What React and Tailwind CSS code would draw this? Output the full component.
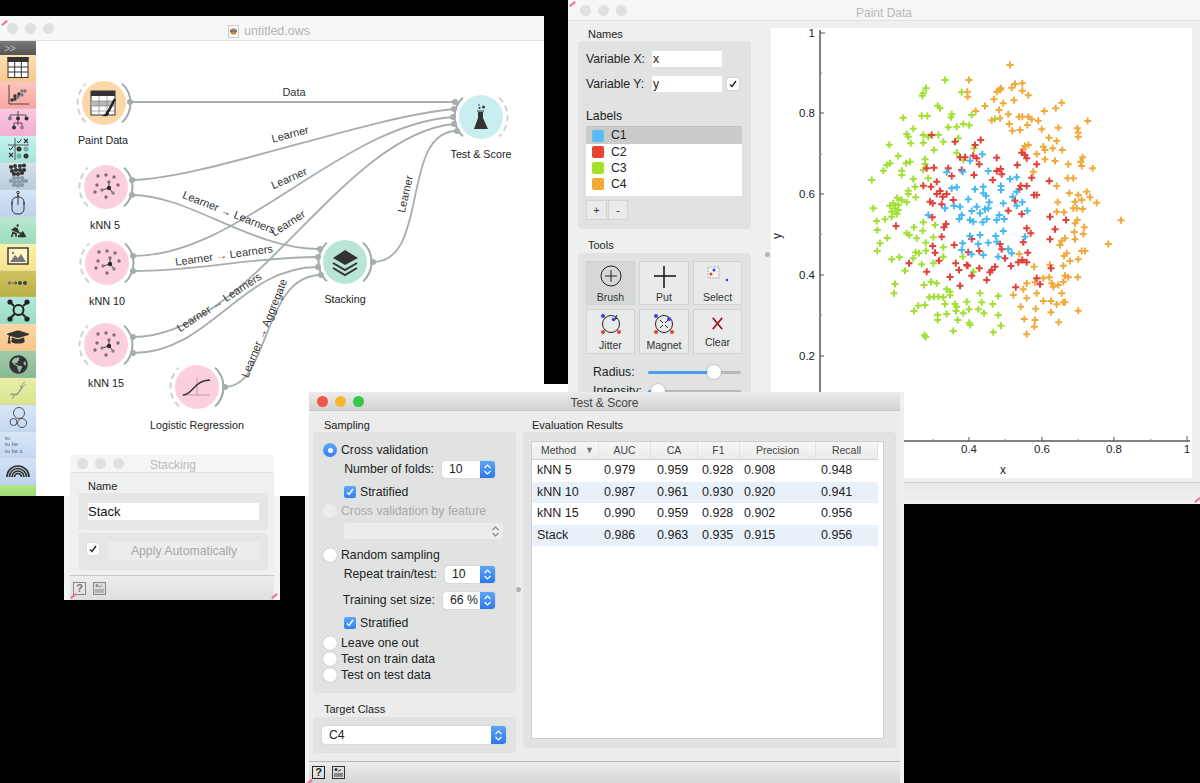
import React from "react";
import { FaGlobeAmericas, FaGraduationCap } from "react-icons/fa";
import { FaPersonDigging } from "react-icons/fa6";

const SANS = "font-['Liberation_Sans',Arial,sans-serif]";

const ORANGE = [720,135,597,180,592,215,593,230,735,192,757,190,725,203,693,205,680,215,690,210,757,212,775,226,672,238,700,250,732,241,645,258,617,273,687,270,715,283,747,290,757,290,775,290,785,298,805,302,823,273,857,265,875,248,953,303,922,325,925,338,925,350,865,323,815,328,837,353,860,363,820,380,825,390,848,385,877,390,665,301,690,295,718,312,727,332,750,330,772,315,775,375,765,378,760,388,800,402,825,418,855,423,895,433,938,412,932,425,935,438,968,445,893,475,910,475,790,455,860,498,898,520,925,525,950,515,935,540,960,532,980,548,915,545,910,565,920,565,938,567,863,547,860,575,882,577,922,600,915,610,1053,601,943,622,913,636,940,642,915,658,885,655,875,662,870,675,1015,672,935,693,945,693,890,700,882,708,925,718,900,723,748,702,880,737,840,735,792,740,885,767,895,772,923,772,838,772,820,775,795,787,770,790,760,808,730,825,770,835,800,820,820,843,843,843,860,853,880,847,885,847,845,790,850,800,865,795,880,785,875,820,752,860,797,866,843,877,925,872,763,897,795,900,793,920,866,907,770,943];
const GREEN = [525,180,468,205,460,220,457,227,575,217,503,257,510,265,545,283,543,292,400,293,455,287,472,288,605,285,675,297,430,326,535,322,560,320,580,312,598,316,410,342,415,350,422,370,460,345,475,350,505,345,520,365,565,355,460,368,358,374,492,390,385,408,560,398,465,418,612,385,580,420,360,430,350,435,408,430,420,425,340,452,395,452,395,465,465,432,460,450,430,477,305,480,475,475,435,500,415,512,415,522,437,532,382,533,395,540,410,547,360,557,370,550,385,555,375,565,385,570,365,575,380,582,310,565,365,590,345,598,320,603,322,630,432,622,460,607,458,632,495,615,410,640,418,645,352,654,440,655,490,652,330,670,467,668,322,693,520,682,437,697,447,700,468,692,365,718,388,712,430,715,520,710,490,730,455,733,405,752,578,710,610,755,375,792,372,820,462,795,483,785,500,790,530,808,540,815,630,820,540,826,478,832,492,830,505,830,520,832,525,852,590,845,635,847,685,828,668,852,465,855,445,857,432,873,555,852,560,860,558,873,530,882,503,885,580,880,597,868,625,868,642,880,685,885,503,900,563,900,598,908,600,915,693,917,550,933,670,937,463,946,467,950];
const RED = [485,345,555,365,632,360,615,375,570,412,585,412,610,407,620,415,628,433,680,413,755,398,765,405,770,415,800,433,742,435,470,445,492,443,535,445,575,450,545,468,612,465,680,453,692,447,695,463,668,480,785,473,838,483,460,497,483,500,500,485,752,497,770,498,748,508,792,525,800,525,500,522,510,513,530,522,480,545,488,550,518,530,515,553,550,540,735,542,715,572,755,582,840,590,888,600,487,592,528,612,522,622,378,618,515,650,770,625,782,640,855,628,840,658,605,657,760,667,488,678,553,675,690,672,695,688,495,698,595,697,628,693,705,715,773,698,507,722,417,730,557,730,590,735,593,737,567,750,628,745,665,750,675,740,723,738,745,727,757,720,770,727,843,745,470,755,660,757,605,767,540,771,650,780,570,797,800,775,810,793,737,802];
const BLUE = [637,403,600,422,530,457,578,455,655,453,720,477,740,472,545,505,560,502,615,508,640,500,693,498,693,510,640,520,648,527,740,515,595,538,728,530,525,565,552,557,570,560,620,560,645,568,655,565,658,547,700,550,757,547,740,557,605,573,575,585,630,580,475,585,568,597,600,600,610,605,650,597,638,607,680,600,703,597,688,585,772,572,700,633,600,648,630,645,677,648,765,650,578,670,625,672,655,668,680,665,575,690,605,703,685,710,715,687,725,700,640,705];

function plusPath(arr) {
  let d = "";
  for (let i = 0; i < arr.length; i += 2) {
    const x = 770 + arr[i] / 3;
    const y = 20 + arr[i + 1] / 3;
    d += `M${(x - 3.5).toFixed(1)} ${y.toFixed(1)}h7M${x.toFixed(1)} ${(y - 3.5).toFixed(1)}v7`;
  }
  return d;
}

function Lights({ colors }) {
  return (
    <div className="flex items-center gap-[7px]">
      {colors.map((c, i) => (
        <span key={i} className="block w-[11px] h-[11px] rounded-full" style={{ background: c }} />
      ))}
    </div>
  );
}

const G = "#dfe0e0";

function Pink({ className }) {
  return <span className={`absolute block w-[7px] h-[2px] bg-[#f06aa0] rotate-[-40deg] ${className}`} />;
}

/* ------- toolbox ------- */
function TableIcon() {
  return (
    <g stroke="#333" fill="#fff" strokeWidth="1">
      <rect x="8" y="2.5" width="20" height="20" />
      <rect x="8" y="2.5" width="20" height="4" fill="#333" />
      <path d="M14.7 6v16M21.3 6v16M8 12h20M8 17h20" fill="none" />
    </g>
  );
}
function ScatterIcon() {
  return (
    <g>
      <path d="M9 3v19h20" stroke="#444" fill="none" strokeWidth="1" />
      {[[12,18,"#333"],[15,17,"#333"],[15,14,"#333"],[18,15,"#777"],[19,12,"#333"],[22,13,"#777"],[22,9,"#777"],[25,9,"#777"]].map(([x,y,c],i)=>(
        <circle key={i} cx={x} cy={y} r="1.7" fill={c} />
      ))}
    </g>
  );
}
function TreeIcon() {
  return (
    <g>
      <path d="M18 2v6M10 6h16M10 6v3M26 6v3M18 9v7M14 14h8M14 14v3M22 14v3" stroke="#333" fill="none" strokeWidth="0.8" />
      <circle cx="10" cy="9.5" r="2" fill="#777" />
      <circle cx="18" cy="9.5" r="2" fill="#333" />
      <circle cx="26.5" cy="9.5" r="2" fill="#333" />
      <circle cx="14" cy="18.5" r="2" fill="#333" />
      <circle cx="22" cy="18.5" r="2" fill="#888" />
    </g>
  );
}
function MatrixIcon() {
  return (
    <g>
      <path d="M8 9h21M15 2v22" stroke="#333" strokeWidth="0.8" fill="none" />
      <path d="M17 5l1.5 2 3-4M9 12l1.5 2 3-4" stroke="#333" strokeWidth="1" fill="none" />
      <path d="M24 3l4 4M28 3l-4 4M9 17l4 4M13 17l-4 4" stroke="#333" strokeWidth="1.1" fill="none" />
      <circle cx="19" cy="13" r="2.5" fill="#333" />
      <circle cx="26" cy="13" r="2.5" fill="#7aa" />
      <circle cx="19" cy="20" r="2.5" fill="#7aa" />
      <circle cx="26" cy="20" r="2.5" fill="#333" />
    </g>
  );
}
function ClusterIcon() {
  const dark = [[11,4],[15,3],[20,3],[24,2.5],[12,8],[16,7],[20,7],[24,7],[14,11],[18,11],[22,10]];
  const grey = [[14,15],[18,15],[22,15],[11,18],[15,19],[19,19],[23,18],[26,18],[14,22],[18,22.5],[22,22]];
  return (
    <g>
      {dark.map(([x,y],i)=><circle key={i} cx={x} cy={y} r="2.1" fill="#333" />)}
      {grey.map(([x,y],i)=><circle key={i} cx={x} cy={y} r="2.1" fill="#8b96a0" />)}
    </g>
  );
}
function MouseIcon() {
  return (
    <g fill="none" stroke="#333" strokeWidth="1">
      <rect x="12" y="7" width="12" height="17" rx="5" />
      <path d="M18 5v10M18 7v-4" />
      <circle cx="18" cy="2.5" r="1.2" />
      <path d="M12 15v-3M24 15v-3" />
    </g>
  );
}
function ImageIcon() {
  return (
    <g>
      <rect x="8" y="4" width="20" height="16" fill="#fdf6c6" stroke="#333" strokeWidth="1.4" />
      <path d="M10 18l5-7 3 3 3-4 5 8z" fill="#777" />
      <circle cx="13" cy="9" r="1.2" fill="#777" />
    </g>
  );
}
function TsIcon() {
  return (
    <g>
      <circle cx="9.5" cy="13" r="1.8" fill="#777" />
      <path d="M12.5 13h4M15 11.5l2 1.5-2 1.5" stroke="#333" fill="none" strokeWidth="0.8" />
      <circle cx="20" cy="13" r="2" fill="#444" />
      <circle cx="25" cy="13" r="2" fill="#444" />
    </g>
  );
}
function NetIcon() {
  return (
    <g stroke="#222" strokeWidth="2" fill="none">
      <circle cx="18.5" cy="13" r="5" />
      <path d="M14 9l-4-4M23 9l5-4M14.5 17l-5 5M22.5 17l5 5" />
      <circle cx="10" cy="5" r="1.6" fill="#222" />
      <circle cx="27" cy="5" r="1.6" fill="#222" />
      <circle cx="10" cy="22" r="1.6" fill="#222" />
      <circle cx="27" cy="22" r="1.6" fill="#222" />
    </g>
  );
}
function DnaIcon() {
  return (
    <g stroke="#777" strokeWidth="0.7" fill="none">
      <path d="M10 17C14 13 16 21 19 14S24 9 26 6" />
      <path d="M13 21C12 15 19 17 21 11S22 6 25 4" />
      <path d="M12 15.500l2 3M20 8l2.500 2" />
    </g>
  );
}
function VennIcon() {
  return (
    <g fill="none" stroke="#444" strokeWidth="0.9">
      <circle cx="19" cy="8" r="5.5" />
      <circle cx="13.5" cy="17" r="3.5" />
      <circle cx="22" cy="18" r="4.5" />
    </g>
  );
}
function RainbowIcon() {
  return (
    <g fill="none" stroke="#333" strokeWidth="1.7">
      <path d="M7 19a11 11 0 0 1 22 0" />
      <path d="M9.5 19a8.5 8.5 0 0 1 17 0" />
      <path d="M12 19a6 6 0 0 1 12 0" />
      <path d="M14.5 19a3.5 3.5 0 0 1 7 0" />
    </g>
  );
}

const TOOLS = [
  { h: "h-[27px]", c: "from-[#fde0b4] to-[#f7c88c]", i: <TableIcon /> },
  { h: "h-[27px]", c: "from-[#ffc4bd] to-[#f9a6a0]", i: <ScatterIcon /> },
  { h: "h-[27px]", c: "from-[#fcc8e2] to-[#f3aed0]", i: <TreeIcon /> },
  { h: "h-[27px]", c: "from-[#c6f3ec] to-[#a6e5da]", i: <MatrixIcon /> },
  { h: "h-[27px]", c: "from-[#d4e2ec] to-[#b9ccdb]", i: <ClusterIcon /> },
  { h: "h-[27px]", c: "from-[#d6e4f6] to-[#bdd2ec]", i: <MouseIcon /> },
  { h: "h-[27px]", c: "from-[#b9e8cf] to-[#9cdcbc]", fa: <FaPersonDigging size={15} color="#333" /> },
  { h: "h-[27px]", c: "from-[#fbf0a8] to-[#f5e58c]", i: <ImageIcon /> },
  { h: "h-[26px]", c: "from-[#d0c460] to-[#bcb048]", i: <TsIcon /> },
  { h: "h-[27px]", c: "from-[#b4e8d8] to-[#98dcc8]", i: <NetIcon /> },
  { h: "h-[27px]", c: "from-[#fdd7a6] to-[#f8c488]", fa: <FaGraduationCap size={22} color="#333" /> },
  { h: "h-[27px]", c: "from-[#a1cba9] to-[#88b894]", fa: <FaGlobeAmericas size={19} color="#333" /> },
  { h: "h-[27px]", c: "from-[#e8eda8] to-[#dce48e]", i: <DnaIcon /> },
  { h: "h-[27px]", c: "from-[#d8e6f8] to-[#c4d8f2]", i: <VennIcon /> },
  { h: "h-[26px]", c: "from-[#d8e6f8] to-[#c4d8f2]", text: true },
  { h: "h-[27px]", c: "from-[#d4e2f6] to-[#bcd2ee]", i: <RainbowIcon /> },
  { h: "h-[11px]", c: "from-[#b4e88a] to-[#9cdc70]", empty: true },
];

function Toolbox() {
  return (
    <div className="w-[36px] flex flex-col shrink-0">
      <div className="h-[14px] bg-linear-to-b from-[#7a7a7a] to-[#555] flex items-center pl-[4px] text-[#b8b8b8] text-[11px] leading-none tracking-[-1px]">
        &gt;&gt;
      </div>
      {TOOLS.map((t, i) => (
        <div key={i} className={`${t.h} bg-linear-to-b ${t.c} border-b border-[#00000012] flex items-center justify-center overflow-hidden`}>
          {t.fa ? t.fa : t.text ? (
            <div className="w-[28px] pl-[1px] text-[6.5px] leading-[6.5px] text-[#555] font-['Liberation_Serif',serif]">
              to<br />to be<br />to be a
            </div>
          ) : t.empty ? null : (
            <svg width="36" height="27" viewBox="0 0 36 27">{t.i}</svg>
          )}
        </div>
      ))}
    </div>
  );
}

/* ------- canvas ------- */
function arc(cx, cy, r, from, to) {
  const a = (from * Math.PI) / 180;
  const b = (to * Math.PI) / 180;
  return `M${cx + r * Math.cos(a)} ${cy + r * Math.sin(a)}A${r} ${r} 0 0 1 ${cx + r * Math.cos(b)} ${cy + r * Math.sin(b)}`;
}

function Node({ x, y, fill, left = "dash", right = "solid", children }) {
  const dark = "#9ca8a9";
  const light = "#ccd2d2";
  return (
    <g>
      <circle cx={x} cy={y} r="22" fill={fill} />
      <path d={arc(x, y, 26.5, -47, 47)} fill="none" stroke={right === "solid" ? dark : light} strokeWidth="2" strokeDasharray={right === "solid" ? undefined : "6 4"} />
      <path d={arc(x, y, 26.5, 133, 227)} fill="none" stroke={left === "solid" ? dark : light} strokeWidth="2" strokeDasharray={left === "solid" ? undefined : "6 4"} />
      <g transform={`translate(${x} ${y})`}>{children}</g>
    </g>
  );
}

function KnnGlyph() {
  const pts = [[-8,-11],[0,-12],[8,-10],[-9,-2],[12,-2],[-11,5],[0,10]];
  return (
    <g>
      {pts.map(([a,b],i)=><circle key={i} cx={a} cy={b} r="1.7" fill="#7d6b73" />)}
      <path d="M3 1L3 -5M3 1L-4 3M3 1L7 6" stroke="#333" strokeWidth="0.9" />
      <circle cx="3" cy="-5" r="1.7" fill="#7d6b73" />
      <circle cx="-4" cy="3" r="1.7" fill="#8a8088" />
      <circle cx="7" cy="6" r="1.7" fill="#8a8088" />
      <circle cx="3" cy="1" r="2.2" fill="#2b2b2b" />
    </g>
  );
}

const EDGES = [
  "M130 102L455 102",
  "M132 180C200 180 370 116 454 109",
  "M132 195C190 195 250 249 320 249",
  "M133 256C240 256 340 125 453 117",
  "M133 271C200 271 250 257 318 257",
  "M133 337C250 337 340 135 454 124",
  "M133 353C210 353 240 267 318 267",
  "M225 387C270 387 262 275 321 275",
  "M373 262C430 262 400 131 457 131",
];
const DOTS = [[130,102],[132,180],[132,195],[133,256],[133,271],[133,337],[133,353],[225,387],[373,262],[455,102],[454,109],[453,117],[454,124],[457,131],[320,249],[318,257],[318,267],[321,275]];
const ELABELS = [
  ["Data", 294, 92, 0],
  ["Learner", 290, 134, -15],
  ["Learner", 289, 178, -24],
  ["Learner", 288, 223, -33],
  ["Learner → Learners", 229, 212, 21.5],
  ["Learner → Learners", 224, 255, -8],
  ["Learner → Learners", 219, 302, -33],
  ["Learner → Aggregate", 264, 328, -68],
  ["Learner", 405, 194, -77],
];
const NLABELS = [
  ["Paint Data", 103, 140],
  ["kNN 5", 105, 225],
  ["kNN 10", 107, 301],
  ["kNN 15", 106, 383],
  ["Logistic Regression", 197, 425],
  ["Stacking", 345, 299],
  ["Test & Score", 481, 154],
];

function CanvasWindow() {
  return (
    <div className={`absolute left-0 top-[16px] w-[544px] h-[480px] bg-white flex flex-col ${SANS}`}>
      <div className="h-[25px] shrink-0 bg-[#f6f7f7] border-b border-[#e2e2e2] relative flex items-center pl-[7px]">
        <Lights colors={[G, G, G]} />
        <div className="absolute left-[228px] top-[6px] flex items-center gap-[5px] text-[12.5px] text-[#b4b4b4]">
          <svg width="11" height="13" viewBox="0 0 11 13">
            <rect x="0.5" y="0.5" width="10" height="12" fill="#fbfbfb" stroke="#ccc" />
            <circle cx="5.5" cy="6.5" r="3.2" fill="#b89048" />
            <rect x="2" y="5" width="7" height="2" fill="#777" />
          </svg>
          <span>untitled.ows</span>
        </div>
      </div>
      <div className="flex flex-1 min-h-0">
        <Toolbox />
        <div className="flex-1">
          <svg width="508" height="455" viewBox="36 41 508 455" className="block">
            {EDGES.map((d, i) => <path key={i} d={d} fill="none" stroke="#a7aeaf" strokeWidth="1.8" />)}
            <Node x={104} y={103} fill="#fcd8a8">
              <rect x="-13" y="-12" width="24" height="24" fill="#fff" stroke="#333" strokeWidth="1" />
              <rect x="-13" y="-12" width="24" height="5" fill="#333" />
              <rect x="-13" y="-2" width="24" height="5" fill="#b8b8b8" />
              <path d="M-5 -7V12M3 -7V12M-13 -2H11M-13 3H11M-13 8H11" stroke="#777" strokeWidth="0.6" fill="none" />
              <path d="M11 -4L4 9" stroke="#222" strokeWidth="2.6" fill="none" />
              <path d="M4 7c-2 1-2 3-3 4-1 1-3 2-4 1.5 3 1.5 7 1 8-2z" fill="#222" />
            </Node>
            <Node x={106} y={187} fill="#fbcfdc"><KnnGlyph /></Node>
            <Node x={107} y={263} fill="#fbcfdc"><KnnGlyph /></Node>
            <Node x={106} y={345} fill="#fbcfdc"><KnnGlyph /></Node>
            <Node x={197} y={387} fill="#fbcfdc">
              <path d="M-15 8H13M0 -9V8" stroke="#a79aa0" strokeWidth="0.8" fill="none" />
              <path d="M-14 8C-4 8 -3 -7 13 -7" stroke="#333" strokeWidth="1.4" fill="none" />
            </Node>
            <Node x={345} y={262} fill="#b9e5d7" left="solid">
              <path d="M0 -12L13 -4L0 3L-12 -4Z" fill="#333" />
              <path d="M-12 1L0 8L12 1M-12 6L0 13L12 6" stroke="#333" strokeWidth="2" fill="none" />
            </Node>
            <Node x={481} y={117} fill="#c9eef0" left="solid" right="dash">
              <path d="M-3 -5H2V1L7 12H-7L-3 1Z" fill="#333" />
              <path d="M-4 -6H3" stroke="#333" strokeWidth="1" />
              <circle cx="-1.5" cy="-9" r="1.1" fill="#333" />
              <circle cx="2.5" cy="-10" r="1.5" fill="#333" />
              <circle cx="-2" cy="-12" r="0.8" fill="#333" />
            </Node>
            {DOTS.map(([x, y], i) => <circle key={i} cx={x} cy={y} r="3" fill="#a4aeae" />)}
            {ELABELS.map(([t, x, y, a], i) => (
              <text key={i} transform={`translate(${x} ${y}) rotate(${a})`} y="4" textAnchor="middle" fontSize="11" fill="#333">{t}</text>
            ))}
            {NLABELS.map(([t, x, y], i) => (
              <text key={i} x={x} y={y + 4} textAnchor="middle" fontSize="10.75" fill="#222">{t}</text>
            ))}
          </svg>
        </div>
      </div>
      <Pink className="left-[1px] top-[6px]" />
    </div>
  );
}

/* ------- small controls ------- */
function Check({ on, className = "" }) {
  return (
    <span className={`w-[12px] h-[12px] rounded-[2px] flex items-center justify-center shrink-0 ${on ? "bg-linear-to-b from-[#62a8f8] to-[#2f7ff0]" : "bg-white shadow-[0_0_1px_#0006]"} ${className}`}>
      <svg width="10" height="10" viewBox="0 0 10 10">
        <path d="M2 5.5L4 7.5L8 2" fill="none" stroke={on ? "#fff" : "#222"} strokeWidth="1.4" />
      </svg>
    </span>
  );
}

function Radio({ on, off, children }) {
  return (
    <div className={`h-[16px] flex items-center gap-[4px] pl-[10px] text-[12.25px] ${off ? "text-[#a9a9a9]" : "text-[#222]"}`}>
      <span className={`w-[14px] h-[14px] rounded-full flex items-center justify-center shrink-0 ${on ? "bg-linear-to-b from-[#62a8f8] to-[#2f7ff0]" : off ? "bg-[#ececec]" : "bg-white shadow-[0_0_1px_#0006]"}`}>
        {on && <span className="block w-[5px] h-[5px] rounded-full bg-white" />}
      </span>
      {children}
    </div>
  );
}

function Updown({ stroke = "#fff" }) {
  return (
    <svg width="9" height="13" viewBox="0 0 9 13">
      <path d="M1.5 5L4.5 2L7.5 5M1.5 8L4.5 11L7.5 8" fill="none" stroke={stroke} strokeWidth="1.2" />
    </svg>
  );
}

function Spin({ value, w }) {
  return (
    <div className={`${w} h-[17px] rounded-[3px] bg-white shadow-[0_0_1px_#0006] flex items-center justify-between`}>
      <span className="pl-[7px] text-[12.25px] text-[#222]">{value}</span>
      <span className="w-[15px] h-full rounded-r-[3px] bg-linear-to-b from-[#5da5f7] to-[#2d78ec] flex items-center justify-center"><Updown /></span>
    </div>
  );
}

function Help({ dim }) {
  return (
    <span className={`w-[13px] h-[13px] border flex items-center justify-center text-[11px] font-bold leading-none ${dim ? "border-[#888] text-[#777]" : "border-[#222] text-[#222]"}`}>?</span>
  );
}
function ReportIcon({ dim }) {
  const c = dim ? "#888" : "#333";
  return (
    <svg width="13" height="13" viewBox="0 0 13 13">
      <rect x="0.5" y="0.5" width="12" height="12" fill="#dcdcdc" stroke={c} />
      <circle cx="4" cy="3.5" r="1.5" fill={c} />
      <path d="M2 10h9M2 8h9M6 5.5l3-2" stroke={c} fill="none" />
    </svg>
  );
}

/* ------- paint data ------- */
function ToolGlyph({ kind }) {
  if (kind === "brush")
    return (
      <svg width="24" height="24" viewBox="0 0 24 24">
        <circle cx="12" cy="12" r="10" fill="none" stroke="#222" strokeWidth="1" />
        <path d="M12 6v12M6 12h12" stroke="#222" />
      </svg>
    );
  if (kind === "put")
    return (
      <svg width="24" height="24" viewBox="0 0 24 24">
        <path d="M12 2v22M2 12h22" stroke="#111" strokeWidth="1.5" />
      </svg>
    );
  if (kind === "select")
    return (
      <svg width="28" height="24" viewBox="0 0 28 24">
        <rect x="4" y="3" width="11" height="11" fill="#f2f2f2" stroke="#999" strokeDasharray="1.5 1.5" />
        <circle cx="10" cy="6" r="1.5" fill="#4040e0" />
        <circle cx="7" cy="10" r="1.5" fill="#e03c3c" />
        <circle cx="23" cy="16" r="1.3" fill="#4040e0" />
      </svg>
    );
  if (kind === "jitter")
    return (
      <svg width="26" height="26" viewBox="0 0 26 26">
        <circle cx="13" cy="13" r="8.5" fill="none" stroke="#222" />
        <path d="M19 4l-3 5M19 7l-3 2" stroke="#222" fill="none" />
        <circle cx="5" cy="5" r="2" fill="#4040e0" />
        <circle cx="15.5" cy="8.5" r="1.8" fill="#4040e0" />
        <circle cx="5" cy="21" r="2" fill="#e04040" />
        <circle cx="21" cy="21" r="2" fill="#e04040" />
      </svg>
    );
  if (kind === "magnet")
    return (
      <svg width="26" height="26" viewBox="0 0 26 26">
        <circle cx="13" cy="13" r="8.5" fill="none" stroke="#222" />
        <path d="M9 9l3 3M17 9l-3 3M9 17l3-3M17 17l-3-3" stroke="#222" />
        <circle cx="5" cy="5" r="2" fill="#4040e0" />
        <circle cx="18" cy="8" r="2" fill="#4040e0" />
        <circle cx="5" cy="21" r="2" fill="#e04040" />
        <circle cx="21" cy="21" r="2" fill="#e04040" />
      </svg>
    );
  return (
    <svg width="15" height="15" viewBox="0 0 16 16">
      <path d="M3 2L13 14M13 2L3 14" stroke="#9a2020" strokeWidth="1.8" />
    </svg>
  );
}

function ToolBtn({ kind, label, active, extra, gap }) {
  return (
    <div className={`border border-[#d2d4d3] flex flex-col items-center justify-end text-[10.5px] leading-[12px] text-[#333] ${active ? "bg-[#d6d8d7]" : "bg-[#e9ebea]"} ${extra}`}>
      <ToolGlyph kind={kind} />
      <span className={gap}>{label}</span>
    </div>
  );
}

function Slider({ label, pct, knob, mt }) {
  return (
    <div className={`flex items-center ${mt} pl-[7px] text-[12.25px] text-[#222] h-[16px]`}>
      <span className="w-[55px]">{label}</span>
      <div className="relative w-[93px] h-[3px] rounded-full bg-[#b9b9b9]">
        <div className={`h-full rounded-full bg-[#4a9df0] ${pct}`} />
        <span className={`absolute top-[-5.5px] w-[14px] h-[14px] rounded-full bg-white shadow-[0_0_2px_#0005] ${knob}`} />
      </div>
    </div>
  );
}

function PaintWindow() {
  const labels = [["C1", "#5cbcf8", true], ["C2", "#e8432e"], ["C3", "#a4e02c"], ["C4", "#f5a83a"]];
  return (
    <div className={`absolute left-[568px] top-0 w-[632px] h-[504px] bg-[#eef0ef] flex flex-col overflow-hidden ${SANS}`}>
      <div className="h-[21px] shrink-0 bg-[#f5f6f6] border-b border-[#e0e1e1] relative flex items-center pl-[12px]">
        <Lights colors={[G, G, G]} />
        <span className="absolute left-0 right-0 top-[4px] text-center text-[12px] text-[#b8b8b8]">Paint Data</span>
        <Pink className="left-[1px] top-[3px]" />
      </div>
      <div className="flex h-[461px] shrink-0 relative">
        <div className="w-[203px] shrink-0 pt-[6px]">
          <div className="pl-[20px] h-[14px] text-[11px] leading-[14px] text-[#222]">Names</div>
          <div className="ml-[10px] w-[173px] h-[188px] rounded-[4px] bg-[#e1e3e2] pl-[8px] pt-[10px]">
            <div className="flex items-center h-[16px] text-[12.25px] text-[#222]">
              <span className="w-[66px] pt-[1px]">Variable X:</span>
              <div className="w-[70px] h-[16px] bg-white pl-[1px] leading-[17px]">x</div>
            </div>
            <div className="flex items-center h-[16px] mt-[9px] text-[12.25px] text-[#222]">
              <span className="w-[66px] pt-[1px]">Variable Y:</span>
              <div className="w-[70px] h-[16px] bg-white pl-[1px] leading-[17px]">y</div>
              <Check className="ml-[5px]" />
            </div>
            <div className="mt-[17px] h-[14px] leading-[14px] text-[12.25px] text-[#222]">Labels</div>
            <div className="mt-[3px] w-[156px] h-[70px] bg-white border-t border-[#c0c0c0]">
              {labels.map(([t, c, sel]) => (
                <div key={t} className={`flex items-center gap-[7px] pl-[6px] text-[12.25px] text-[#222] ${sel ? "bg-[#cbcbcb] h-[17px]" : "h-[16px]"}`}>
                  <span className="block w-[12px] h-[12px] rounded-[2px]" style={{ background: c }} />
                  {t}
                </div>
              ))}
            </div>
            <div className="mt-[4px] flex gap-[1px]">
              <div className="w-[21px] h-[20px] bg-[#e9ebea] border border-[#d2d4d3] flex items-center justify-center text-[11px] leading-none text-[#333]">+</div>
              <div className="w-[20px] h-[20px] bg-[#e9ebea] border border-[#d2d4d3] flex items-center justify-center text-[11px] leading-none text-[#333]">-</div>
            </div>
          </div>
          <div className="mt-[9px] pl-[20px] h-[14px] text-[11px] leading-[14px] text-[#222]">Tools</div>
          <div className="mt-[1px] ml-[10px] w-[173px] h-[190px] rounded-[4px] bg-[#e1e3e2] pl-[8px] pt-[8px]">
            <div className="grid grid-cols-[49px_50px_49px] grid-rows-[44px_45px] gap-[4px]">
              <ToolBtn kind="brush" label="Brush" active extra="pb-[1px]" gap="mt-[3px]" />
              <ToolBtn kind="put" label="Put" extra="pb-[1px]" gap="mt-[3px]" />
              <ToolBtn kind="select" label="Select" extra="pb-[1px]" gap="mt-[3px]" />
              <ToolBtn kind="jitter" label="Jitter" extra="pb-[2px]" gap="mt-[2px]" />
              <ToolBtn kind="magnet" label="Magnet" extra="pb-[2px]" gap="mt-[2px]" />
              <ToolBtn kind="clear" label="Clear" extra="pb-[5px]" gap="mt-[5px]" />
            </div>
            <Slider label="Radius:" pct="w-[70%]" knob="left-[59px]" mt="mt-[10px]" />
            <Slider label="Intensity:" pct="w-[8%]" knob="left-[3px]" mt="mt-[3px]" />
          </div>
        </div>
        <span className="absolute left-[197px] top-[231px] w-[5px] h-[5px] rounded-full bg-[#b4b8b8]" />
        <div className="mt-[7px] w-[421px] h-[450px] bg-white">
          <svg width="421" height="450" viewBox="771 28 421 450" className="block">
            <path d="M820 30V441M820 441H1190" stroke="#5a5a5a" strokeWidth="1.5" fill="none" />
            <path d="M820 33h5M820 113h4M820 194h4M820 275h4M820 356h4" stroke="#555" fill="none" />
            <path d="M820 73h2M820 154h2M820 234h2M820 315h2M820 396h2" stroke="#888" fill="none" />
            <path d="M896 441v-3M969 441v-4M1042 441v-4M1114 441v-4M1187 441v-5" stroke="#555" fill="none" />
            <path d="M933 441v-2M1005 441v-2M1078 441v-2M1151 441v-2" stroke="#888" fill="none" />
            {[["1",33],["0.8",113],["0.6",194],["0.4",275],["0.2",356]].map(([t,y])=>(
              <text key={t} x="815" y={y+4} textAnchor="end" fontSize="11.5" fill="#222">{t}</text>
            ))}
            {[["0.2",896],["0.4",969],["0.6",1042],["0.8",1114],["1",1187]].map(([t,x])=>(
              <text key={t} x={x} y="453" textAnchor="middle" fontSize="11.5" fill="#222">{t}</text>
            ))}
            <text x="1003" y="474" textAnchor="middle" fontSize="12" fill="#222">x</text>
            <text transform="translate(781 236) rotate(-90)" textAnchor="middle" fontSize="12" fill="#222">y</text>
            <path d={plusPath(GREEN)} stroke="#9fe033" strokeWidth="2" fill="none" />
            <path d={plusPath(ORANGE)} stroke="#f0aa3c" strokeWidth="2" fill="none" />
            <path d={plusPath(RED)} stroke="#e2403a" strokeWidth="2" fill="none" />
            <path d={plusPath(BLUE)} stroke="#48b8f2" strokeWidth="2" fill="none" />
          </svg>
        </div>
      </div>
      <div className="flex-1 border-t border-[#cfd0d0] bg-linear-to-b from-[#e8e9e9] to-[#f0f1f1]" />
      <Pink className="right-[-1px] bottom-[3px]" />
    </div>
  );
}

/* ------- test & score ------- */
const HEAD = [["Method", "pl-[9px] justify-start"], ["AUC", "justify-center"], ["CA", "justify-center"], ["F1", "justify-center"], ["Precision", "justify-center"], ["Recall", "justify-center"]];
const ROWS = [
  ["kNN 5", "0.979", "0.959", "0.928", "0.908", "0.948"],
  ["kNN 10", "0.987", "0.961", "0.930", "0.920", "0.941"],
  ["kNN 15", "0.990", "0.959", "0.928", "0.902", "0.956"],
  ["Stack", "0.986", "0.963", "0.935", "0.915", "0.956"],
];
const CELL = ["pl-[5px]", "pl-[5px]", "pl-[6px]", "pl-[4px]", "pl-[4px]", "pl-[5px]"];
const COLS = "grid grid-cols-[67px_52px_47px_42px_76px_62px]";

function TestWindow() {
  return (
    <div className={`absolute left-[305px] top-[392px] w-[599px] h-[391px] bg-linear-to-b from-white from-[26.6%] to-[#f1f2f2] to-[26.6%] px-[4px] ${SANS}`}>
      <div className="absolute right-0 top-0 w-[4px] h-[112px] bg-[#eef0ef]" />
      <div className="h-full flex flex-col bg-[#ececec] relative">
        <div className="h-[19px] shrink-0 rounded-t-[4px] bg-linear-to-b from-[#ebebeb] to-[#d3d3d3] border-b border-[#c8c8c8] relative flex items-center pl-[8px]">
          <Lights colors={["#f1554e", "#f7b733", "#35c748"]} />
          <span className="absolute left-0 right-0 top-[2px] text-center text-[12px] text-[#444]">Test &amp; Score</span>
        </div>
        <div className="flex h-[350px] shrink-0 relative">
          <div className="w-[207px] shrink-0 pl-[4px]">
            <div className="h-[14px] mt-[7px] pl-[11px] text-[11px] leading-[14px] text-[#222]">Sampling</div>
            <div className="w-[203px] h-[261px] rounded-[4px] bg-[#e1e3e2] pt-[10px]">
              <Radio on>Cross validation</Radio>
              <div className="mt-[2px] h-[18px] flex items-center justify-end pr-[21px] gap-[8px] text-[12.25px] text-[#222]">
                <span>Number of folds:</span><Spin value="10" w="w-[53px]" />
              </div>
              <div className="mt-[6px] h-[16px] flex items-center gap-[4px] pl-[31px] text-[12.25px] text-[#222]"><Check on />Stratified</div>
              <div className="mt-[3px]"><Radio off>Cross validation by feature</Radio></div>
              <div className="mt-[4px] ml-[31px] w-[159px] h-[16px] rounded-[3px] bg-[#ececec] flex items-center justify-end pr-[3px]"><Updown stroke="#888" /></div>
              <div className="mt-[8px]"><Radio>Random sampling</Radio></div>
              <div className="mt-[2px] h-[18px] flex items-center justify-end pr-[21px] gap-[8px] text-[12.25px] text-[#222]">
                <span>Repeat train/test:</span><Spin value="10" w="w-[50px]" />
              </div>
              <div className="mt-[9px] h-[17px] flex items-center justify-end pr-[21px] gap-[8px] text-[12.25px] text-[#222]">
                <span>Training set size:</span><Spin value="66 %" w="w-[52px]" />
              </div>
              <div className="mt-[6px] h-[16px] flex items-center gap-[4px] pl-[31px] text-[12.25px] text-[#222]"><Check on />Stratified</div>
              <div className="mt-[4px]"><Radio>Leave one out</Radio></div>
              <Radio>Test on train data</Radio>
              <Radio>Test on test data</Radio>
            </div>
            <div className="h-[14px] mt-[9px] pl-[11px] text-[11px] leading-[14px] text-[#222]">Target Class</div>
            <div className="mt-[1px] w-[203px] h-[36px] rounded-[4px] bg-[#e1e3e2] pl-[9px] pt-[9px]">
              <div className="w-[184px] h-[18px] rounded-[3px] bg-white shadow-[0_0_1px_#0006] flex items-center justify-between">
                <span className="pl-[7px] text-[12.25px] text-[#222]">C4</span>
                <span className="w-[15px] h-full rounded-r-[3px] bg-linear-to-b from-[#5da5f7] to-[#2d78ec] flex items-center justify-center"><Updown /></span>
              </div>
            </div>
          </div>
          <span className="absolute left-[207px] top-[176px] w-[5px] h-[5px] rounded-full bg-[#aeb2b2]" />
          <div className="ml-[7px] w-[373px]">
            <div className="h-[14px] mt-[7px] pl-[9px] text-[11px] leading-[14px] text-[#222]">Evaluation Results</div>
            <div className="w-[373px] h-[316px] rounded-[4px] bg-[#e1e3e2] pl-[8px] pt-[9px]">
              <div className="w-[353px] h-[298px] bg-white border border-[#cfcfcf]">
                <div className={`${COLS} h-[18px] bg-linear-to-b from-[#f6f6f6] to-[#ebebeb] border-b border-[#d0d0d0] w-[346px] text-[10.5px] text-[#444]`}>
                  {HEAD.map(([t, c], i) => (
                    <div key={t} className={`flex items-center border-r border-[#e2e2e2] ${c}`}>
                      {t}
                      {i === 0 && <span className="ml-[9px] text-[9px] text-[#777]">▼</span>}
                    </div>
                  ))}
                </div>
                {ROWS.map((r, ri) => (
                  <div key={ri} className={`${COLS} w-[346px] h-[21.5px] items-center text-[12.5px] text-[#222] ${ri % 2 ? "bg-[#e8f1fa]" : "bg-white"}`}>
                    {r.map((v, i) => <div key={i} className={CELL[i]}>{v}</div>)}
                  </div>
                ))}
              </div>
            </div>
          </div>
        </div>
        <div className="flex-1 border-t border-[#b8b8b8] bg-linear-to-b from-[#ececec] to-[#d6d6d6] flex items-center pl-[3px] gap-[7px]">
          <Help /><ReportIcon />
        </div>
        <Pink className="left-[-3px] bottom-[0px]" />
      </div>
    </div>
  );
}

/* ------- stacking ------- */
function StackingWindow() {
  return (
    <div className={`absolute left-[64px] top-[449px] w-[216px] h-[151px] bg-linear-to-b from-white from-[31%] to-[#f2f3f3] to-[31%] px-[6px] pt-[6px] ${SANS}`}>
      <div className="h-full flex flex-col bg-[#eff0f0] relative">
        <div className="h-[18px] shrink-0 bg-[#f4f5f5] border-b border-[#e3e3e3] relative flex items-center pl-[7px]">
          <Lights colors={[G, G, G]} />
          <span className="absolute left-0 right-[-2px] top-[1px] text-center text-[12px] text-[#bbb]">Stacking</span>
        </div>
        <div className="h-[14px] mt-[6px] pl-[18px] text-[11px] leading-[14px] text-[#222]">Name</div>
        <div className="ml-[8px] w-[190px] h-[37px] rounded-[4px] bg-[#e5e7e6] pl-[10px] pt-[10px]">
          <div className="w-[171px] h-[17px] bg-white text-[13px] leading-[18px] text-[#111]">Stack</div>
        </div>
        <div className="mt-[3px] ml-[8px] w-[190px] h-[37px] rounded-[4px] bg-[#e5e7e6] pl-[9px] pt-[10px] flex items-start gap-[9px]">
          <Check />
          <div className="w-[152px] h-[18px] -mt-[1px] bg-[#ebecec] rounded-[2px] text-center text-[12.25px] leading-[19px] text-[#a8a8a8]">Apply Automatically</div>
        </div>
        <div className="flex-1 mt-[5px] border-t border-[#c8c8c8] bg-linear-to-b from-[#eceded] to-[#dfdfdf] flex items-center pl-[3px] gap-[7px]">
          <Help dim /><ReportIcon dim />
        </div>
      </div>
      <Pink className="left-[6px] bottom-[3px]" />
      <Pink className="right-[2px] bottom-[3px]" />
    </div>
  );
}

export default function App() {
  return (
    <div className="relative w-[1200px] h-[783px] bg-black overflow-hidden">
      <div className="absolute left-[544px] top-[384px] w-[24px] h-[12px] bg-white" />
      <CanvasWindow />
      <PaintWindow />
      <StackingWindow />
      <TestWindow />
    </div>
  );
}
